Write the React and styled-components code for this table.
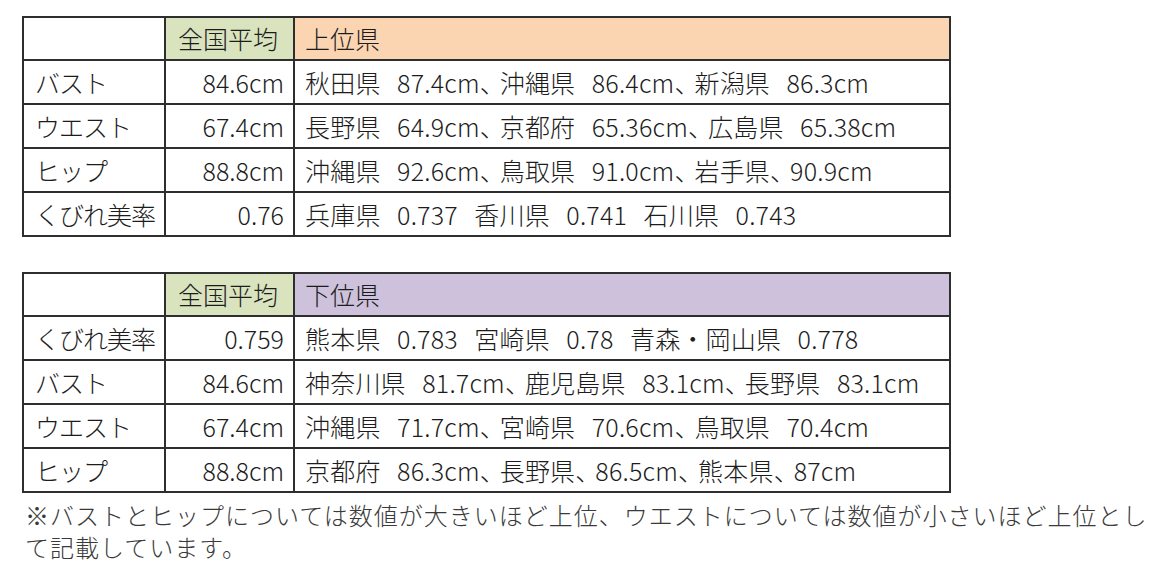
import React from 'react'
import styled, { createGlobalStyle } from 'styled-components'

const GlobalStyle = createGlobalStyle`
  html, body {
    margin: 0;
    padding: 0;
    background: #ffffff;
  }
  body {
    font-family: "Noto Sans CJK JP", "Noto Sans", sans-serif;
    font-weight: 300;
    color: #1c1c1c;
  }
`

const Page = styled.div`
  display: flex;
  flex-direction: column;
  align-items: flex-start;
  padding: 16px 0 0 22px;
`

const Table = styled.div`
  display: grid;
  grid-template-columns: 142px 129px 656px;
  grid-template-rows: 43px repeat(4, 44px);
  border-top: 2px solid #2e2e2e;
  border-left: 2px solid #2e2e2e;
  margin-bottom: ${({ $gap }) => $gap || 0}px;
`

const Cell = styled.div`
  display: flex;
  align-items: center;
  border-right: 2px solid #2e2e2e;
  border-bottom: 2px solid #2e2e2e;
  font-size: 25px;
  line-height: 1;
  white-space: pre;
  overflow: hidden;
`

const HeadCell = styled(Cell)`
  background: ${({ $bg }) => $bg || '#ffffff'};
  padding-left: ${({ $pad }) => $pad ?? 10}px;
`

const LabelCell = styled(Cell)`
  padding-left: 11px;
  letter-spacing: -1px;
`

const AvgCell = styled(Cell)`
  justify-content: flex-end;
  padding-right: 9px;
`

const DataCell = styled(Cell)`
  padding-left: 10px;
  letter-spacing: 0.2px;
  word-spacing: 2.5px;
`

// the comma in the source font is a little narrower than a full em
const Comma = styled.span`
  letter-spacing: -5px;
`

const Note = styled.p`
  margin: 6px 0 0;
  padding-left: 3px;
  width: 1146px;
  font-size: 24px;
  line-height: 32px;
  letter-spacing: 1px;
  color: #3a3a3a;
`

const upper = [
  ['バスト', '84.6cm', '秋田県  87.4cm、沖縄県  86.4cm、新潟県  86.3cm'],
  ['ウエスト', '67.4cm', '長野県  64.9cm、京都府  65.36cm、広島県  65.38cm'],
  ['ヒップ', '88.8cm', '沖縄県  92.6cm、鳥取県  91.0cm、岩手県、90.9cm'],
  ['くびれ美率', '0.76', '兵庫県  0.737  香川県  0.741  石川県  0.743'],
]

const lower = [
  ['くびれ美率', '0.759', '熊本県  0.783  宮崎県  0.78  青森・岡山県  0.778'],
  ['バスト', '84.6cm', '神奈川県  81.7cm、鹿児島県  83.1cm、長野県  83.1cm'],
  ['ウエスト', '67.4cm', '沖縄県  71.7cm、宮崎県  70.6cm、鳥取県  70.4cm'],
  ['ヒップ', '88.8cm', '京都府  86.3cm、長野県、86.5cm、熊本県、87cm'],
]

const withCommas = (text) =>
  text.split('、').map((part, i) => (
    <React.Fragment key={i}>
      {i > 0 && <Comma>、</Comma>}
      {part}
    </React.Fragment>
  ))

const RankTable = ({ title, color, rows, gap }) => (
  <Table $gap={gap}>
    <HeadCell />
    <HeadCell $bg="#d9e4bf" $pad={12}>全国平均</HeadCell>
    <HeadCell $bg={color}>{title}</HeadCell>
    {rows.map(([label, avg, data]) => (
      <React.Fragment key={label}>
        <LabelCell>{label}</LabelCell>
        <AvgCell>{avg}</AvgCell>
        <DataCell>{withCommas(data)}</DataCell>
      </React.Fragment>
    ))}
  </Table>
)

export default function App() {
  return (
    <Page>
      <GlobalStyle />
      <RankTable title="上位県" color="#fbd4b2" rows={upper} gap={35} />
      <RankTable title="下位県" color="#cdc1db" rows={lower} />
      <Note>
        ※バストとヒップについては数値が大きいほど上位、ウエストについては数値が小さいほど上位として記載しています。
      </Note>
    </Page>
  )
}
